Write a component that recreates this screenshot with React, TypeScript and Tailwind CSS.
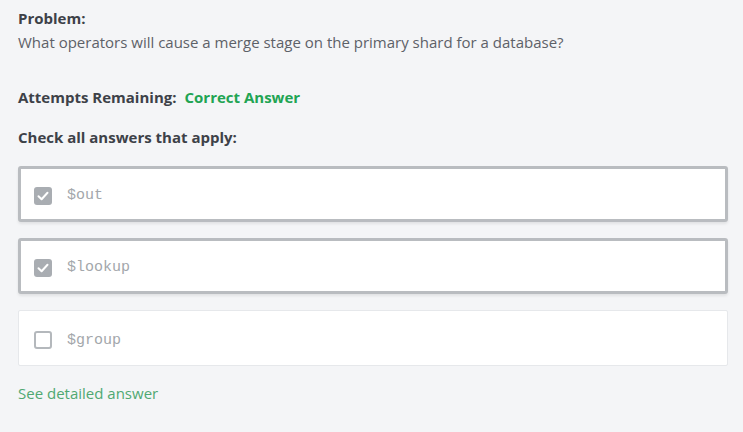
import React from "react";

function Check({ checked }: { checked: boolean }) {
  if (checked) {
    return (
      <span className="flex h-[18px] w-[18px] shrink-0 items-center justify-center rounded-[3px] bg-[#a9adb2]">
        <svg width="14" height="14" viewBox="0 0 14 14" fill="none">
          <path d="M2.5 7.2 L5.6 10.2 L11.5 3.8" stroke="#ffffff" strokeWidth="2" strokeLinecap="round" strokeLinejoin="round" />
        </svg>
      </span>
    );
  }
  return <span className="h-[18px] w-[18px] shrink-0 rounded-[3px] border-2 border-[#b4b8bc] bg-white" />;
}

function Option({ label, checked }: { label: string; checked: boolean }) {
  return (
    <div
      className={
        checked
          ? "flex h-[56px] items-center gap-[15px] rounded-[3px] border-[3px] border-[#b9bcc0] bg-white pl-[13px] pt-[3px] shadow-[0_2px_3px_rgba(0,0,0,0.08)]"
          : "flex h-[56px] items-center gap-[15px] rounded-[2px] border border-[#e6e8eb] bg-white pl-[15px] pt-[4px]"
      }
    >
      <Check checked={checked} />
      <span className="text-[15px] leading-none text-[#a3a7ab] [font-family:'Liberation_Mono',monospace]">{label}</span>
    </div>
  );
}

export default function App() {
  return (
    <div className="min-h-[432px] w-[743px] bg-[#f4f5f7] pl-[18px] pr-[15px] pt-[8px] [font-family:'Open_Sans',sans-serif]">
      <div className="text-[15px] font-bold leading-[20px] text-[#3d4148]">Problem:</div>
      <div className="mt-[4px] text-[15px] leading-[20px] text-[#5d6168]">
        What operators will cause a merge stage on the primary shard for a database?
      </div>
      <div className="mt-[35px] flex gap-[8px] text-[15px] font-bold leading-[20px]">
        <span className="text-[#3d4148]">Attempts Remaining:</span>
        <span className="text-[#21a453]">Correct Answer</span>
      </div>
      <div className="mt-[20px] text-[15px] font-bold leading-[20px] text-[#3d4148]">Check all answers that apply:</div>
      <div className="mt-[19px] flex flex-col gap-[16px]">
        <Option label="$out" checked />
        <Option label="$lookup" checked />
        <Option label="$group" checked={false} />
      </div>
      <div className="mt-[17px] text-[15px] leading-[20px] text-[#4fa872]">See detailed answer</div>
    </div>
  );
}
